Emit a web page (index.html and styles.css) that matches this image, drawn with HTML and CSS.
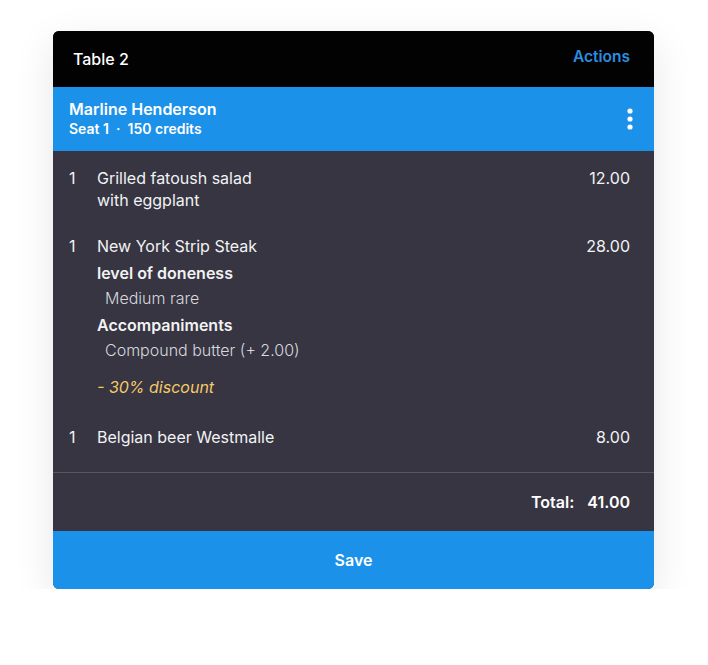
FILE: index.html
```html
<!DOCTYPE html>
<html lang="en">
<head>
    <meta charset="UTF-8">
    <meta name="viewport" content="width=device-width, initial-scale=1.0">
    <title>Table 2</title>
    <link rel="stylesheet" href="styles.css">
</head>
<body>
<div class="card">
    <div class="card-header">
        <span class="table-name">Table 2</span>
        <a class="actions" href="#">Actions</a>
    </div>
    <div class="guest">
        <div>
            <div class="guest-name">Marline Henderson</div>
            <div class="guest-meta">Seat 1 &nbsp;·&nbsp; 150 credits</div>
        </div>
        <svg class="more" width="6" height="22" viewBox="0 0 6 22">
            <circle cx="3" cy="3" r="2.6" fill="#fff"/>
            <circle cx="3" cy="11" r="2.6" fill="#fff"/>
            <circle cx="3" cy="19" r="2.6" fill="#fff"/>
        </svg>
    </div>
    <div class="items">
        <div class="item">
            <span class="qty">1</span>
            <div class="item-body">
                <div class="item-name">Grilled fatoush salad<br>with eggplant</div>
            </div>
            <span class="price">12.00</span>
        </div>
        <div class="item">
            <span class="qty">1</span>
            <div class="item-body">
                <div class="item-name">New York Strip Steak</div>
                <div class="mod-label">level of doneness</div>
                <div class="mod-option">Medium rare</div>
                <div class="mod-label">Accompaniments</div>
                <div class="mod-option">Compound butter (+ 2.00)</div>
                <div class="discount">- 30% discount</div>
            </div>
            <span class="price">28.00</span>
        </div>
        <div class="item">
            <span class="qty">1</span>
            <div class="item-body">
                <div class="item-name">Belgian beer Westmalle</div>
            </div>
            <span class="price">8.00</span>
        </div>
    </div>
    <div class="total">
        <span>Total:</span>
        <span>41.00</span>
    </div>
    <button class="save">Save</button>
</div>
</body>
</html>
```

FILE: styles.css
```css
body {
    font-family: Inter, "Noto Sans", sans-serif;
    margin: 0;
    padding: 31px 0 0 53px;
    background-color: #fff;
}
.card {
    width: 601px;
    border-radius: 6px;
    overflow: hidden;
    background: #363541;
    box-shadow: 0 12px 40px rgba(0,0,0,0.1);
}
.card-header {
    height: 56px;
    background: #020203;
    display: flex;
    align-items: center;
    justify-content: space-between;
    padding: 0 24px 0 20px;
}
.table-name {
    color: #fff;
    font-size: 16px;
    font-weight: 500;
}
.actions {
    color: #2a8ee0;
    font-size: 15.5px;
    font-weight: 600;
    text-decoration: none;
    margin-top: -5px;
}
.guest {
    height: 64px;
    background: #1b91e9;
    color: #fff;
    display: flex;
    align-items: center;
    justify-content: space-between;
    padding: 0 21px 0 16px;
}
.guest-name {
    font-size: 16px;
    font-weight: 600;
    line-height: 20px;
}
.guest-meta {
    font-size: 14px;
    font-weight: 600;
    line-height: 20px;
}
.items {
    display: flex;
    flex-direction: column;
    gap: 24px;
    padding: 16px 24px 24px 16px;
    border-bottom: 1px solid #57565f;
    color: #f2f2f4;
    font-size: 16px;
    line-height: 22px;
}
.item {
    display: flex;
}
.qty {
    width: 28px;
}
.item-body {
    flex: 1;
}
.mod-label {
    font-weight: 600;
    margin-top: 5px;
}
.mod-option {
    color: #d8d8de;
    font-weight: 300;
    margin-top: 3px;
    padding-left: 8px;
}
.discount {
    color: #f5c96a;
    font-style: italic;
    margin-top: 15px;
    margin-bottom: 4px;
}
.total {
    height: 58px;
    display: flex;
    align-items: center;
    justify-content: flex-end;
    gap: 13px;
    padding-right: 24px;
    color: #fff;
    font-size: 16px;
    font-weight: 600;
}
.save {
    display: block;
    width: 100%;
    height: 58px;
    border: none;
    background: #1b91e9;
    color: #fff;
    font-family: inherit;
    font-size: 16px;
    font-weight: 600;
    cursor: pointer;
}
```
